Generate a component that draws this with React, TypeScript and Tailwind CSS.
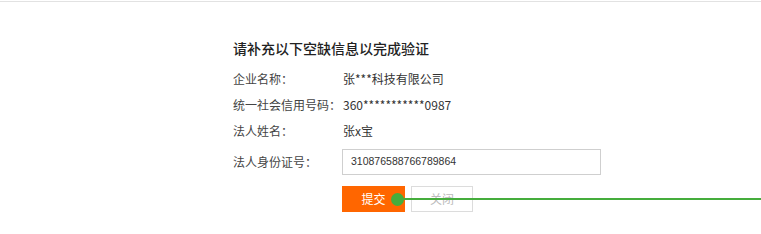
import React from 'react';

const rows = [
  { label: '企业名称：', value: '张***科技有限公司' },
  { label: '统一社会信用号码：', value: '360***********0987' },
  { label: '法人姓名：', value: '张x宝' },
];

export default function App() {
  return (
    <div
      className="relative h-[234px] w-[761px] overflow-hidden bg-white text-[#333]"
      style={{ fontFamily: '"Noto Sans CJK SC", "Noto Sans", sans-serif' }}
    >
      <div className="h-[2px] border-b border-[#e2e2e2]" />
      <div className="pl-[233px] pt-[36px]">
        <h2 className="text-[14px] font-medium leading-[20px] text-[#222]">请补充以下空缺信息以完成验证</h2>
        <div className="mt-[8px] flex flex-col">
          {rows.map((r) => (
            <div key={r.label} className="flex h-[26px] items-center text-[12px]">
              <span className="w-[110px] text-[#444]">{r.label}</span>
              <span className="text-[#333]">{r.value}</span>
            </div>
          ))}
          <div className="mt-[5px] flex items-center text-[12px]">
            <span className="w-[109px] text-[#444]">法人身份证号：</span>
            <div
              className="flex h-[26px] w-[259px] items-center border border-[#cfcfcf] px-[8px] text-[10.5px] text-[#333]"
              style={{ fontFamily: '"Liberation Sans", Arial, sans-serif' }}
            >
              310876588766789864
            </div>
          </div>
          <div className="mt-[11px] flex gap-[6px] pl-[109px]">
            <button className="h-[26px] w-[63px] bg-[#ff6600] text-[12px] text-white">提交</button>
            <button className="h-[26px] w-[62px] border border-[#dcdcdc] bg-white text-[12px] text-[#bbb]">关闭</button>
          </div>
        </div>
      </div>
      <div className="absolute left-[391px] top-[193px] h-[13px] w-[13px] rounded-full bg-[#45ad3c]" />
      <div className="absolute left-[397px] top-[198px] h-[2px] w-[364px] bg-[#45ad3c]" />
    </div>
  );
}
